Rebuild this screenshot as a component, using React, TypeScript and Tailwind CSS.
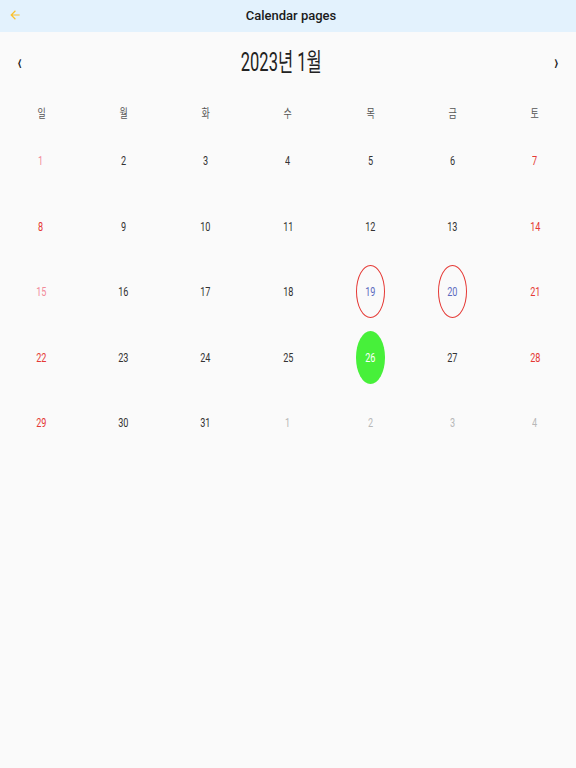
import React from "react";

type Cell = { d: number; kind: "sun" | "sunLight" | "sat" | "norm" | "next" | "mark" | "today" };

const rows: Cell[][] = [
  [
    { d: 1, kind: "sunLight" },
    { d: 2, kind: "norm" },
    { d: 3, kind: "norm" },
    { d: 4, kind: "norm" },
    { d: 5, kind: "norm" },
    { d: 6, kind: "norm" },
    { d: 7, kind: "sat" },
  ],
  [
    { d: 8, kind: "sun" },
    { d: 9, kind: "norm" },
    { d: 10, kind: "norm" },
    { d: 11, kind: "norm" },
    { d: 12, kind: "norm" },
    { d: 13, kind: "norm" },
    { d: 14, kind: "sat" },
  ],
  [
    { d: 15, kind: "sunLight" },
    { d: 16, kind: "norm" },
    { d: 17, kind: "norm" },
    { d: 18, kind: "norm" },
    { d: 19, kind: "mark" },
    { d: 20, kind: "mark" },
    { d: 21, kind: "sat" },
  ],
  [
    { d: 22, kind: "sun" },
    { d: 23, kind: "norm" },
    { d: 24, kind: "norm" },
    { d: 25, kind: "norm" },
    { d: 26, kind: "today" },
    { d: 27, kind: "norm" },
    { d: 28, kind: "sat" },
  ],
  [
    { d: 29, kind: "sun" },
    { d: 30, kind: "norm" },
    { d: 31, kind: "norm" },
    { d: 1, kind: "next" },
    { d: 2, kind: "next" },
    { d: 3, kind: "next" },
    { d: 4, kind: "next" },
  ],
];

const weekdays = ["일", "월", "화", "수", "목", "금", "토"];

function DayCell({ c }: { c: Cell }) {
  const color =
    c.kind === "sun" || c.kind === "sat"
      ? "text-[#e53935]"
      : c.kind === "sunLight"
      ? "text-[#f28b9a]"
      : c.kind === "next"
      ? "text-[#b8b8b8]"
      : c.kind === "mark"
      ? "text-[#5c6bc0]"
      : c.kind === "today"
      ? "text-white"
      : "text-[#333333]";
  return (
    <div className="flex items-center justify-center h-[65.5px]">
      <div
        className={
          "flex items-center justify-center w-[29px] h-[53px] rounded-[50%] " +
          (c.kind === "mark" ? "border-[1.5px] border-[#e53935] " : "") +
          (c.kind === "today" ? "bg-[#47f03a] " : "")
        }
      >
        <span className={"inline-block scale-x-[0.7] text-[13px] leading-none " + color}>{c.d}</span>
      </div>
    </div>
  );
}

export default function App() {
  return (
    <div
      className="w-[576px] h-[768px] bg-[#fafafa] flex flex-col"
      style={{ fontFamily: 'Roboto, "Noto Sans CJK KR", sans-serif' }}
    >
      <div className="h-8 bg-[#e3f2fd] flex items-center relative">
        <svg className="absolute left-[8px] top-[8px]" width="14" height="14" viewBox="0 0 24 24">
          <path d="M20 11H7.83l5.59-5.59L12 4l-8 8 8 8 1.41-1.41L7.83 13H20v-2z" fill="#fbc02d" />
        </svg>
        <div className="flex-1 text-center text-[13px] text-[#1a1a1a] font-medium pl-[6px]">Calendar pages</div>
      </div>
      <div className="flex items-center justify-between h-[60px] px-[16px]">
        <span className="text-[22px] text-[#222] scale-x-[0.6] inline-block font-bold leading-none">‹</span>
        <span className="inline-block scale-x-[0.66] text-[25px] text-[#222] leading-none -ml-[14px]">
          2023년 1월
        </span>
        <span className="text-[22px] text-[#222] scale-x-[0.6] inline-block font-bold leading-none">›</span>
      </div>
      <div className="grid grid-cols-7 h-[44px] items-center">
        {weekdays.map((w) => (
          <div key={w} className="flex justify-center">
            <span className="inline-block scale-x-[0.75] text-[12px] text-[#555]">{w}</span>
          </div>
        ))}
      </div>
      <div className="flex flex-col -mt-[8px]">
        {rows.map((r, i) => (
          <div key={i} className="grid grid-cols-7">
            {r.map((c, j) => (
              <DayCell key={j} c={c} />
            ))}
          </div>
        ))}
      </div>
    </div>
  );
}
